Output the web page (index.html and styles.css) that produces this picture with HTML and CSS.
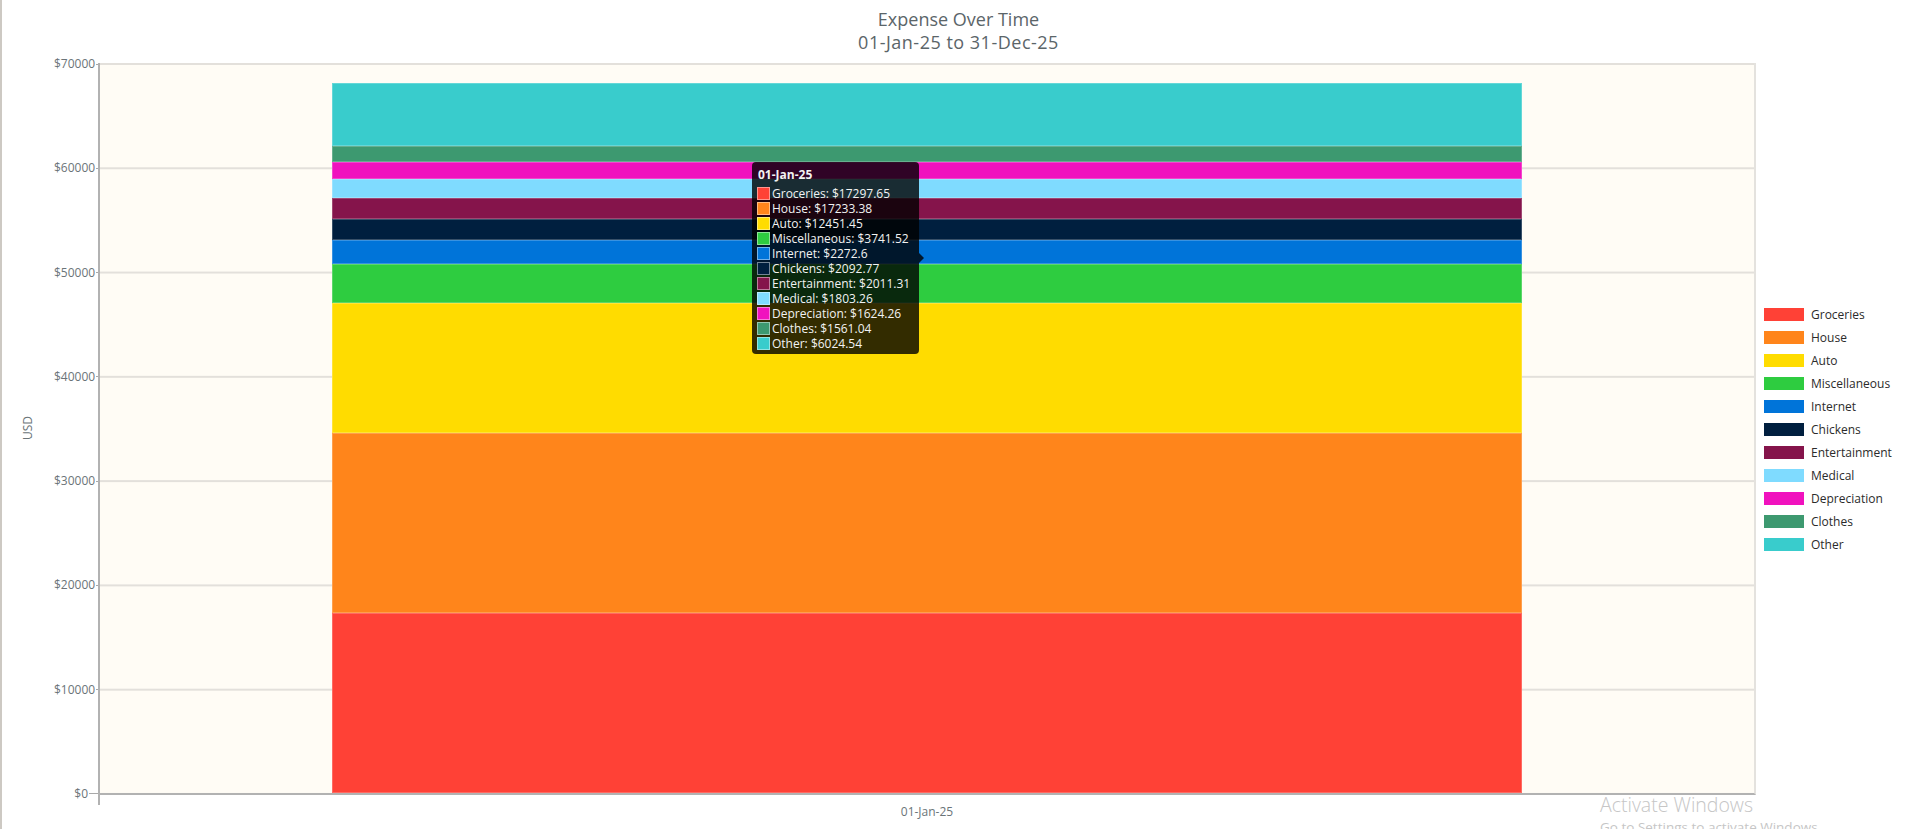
FILE: index.html
```html
<!DOCTYPE html>
<html>
<head>
<meta charset="utf-8">
<title>Expense Over Time</title>
<link rel="stylesheet" href="styles.css">
</head>
<body>
<div class="page">
  <div class="title">
    <div class="t1">Expense Over Time</div>
    <div class="t2">01-Jan-25 to 31-Dec-25</div>
  </div>
  <div class="chart-row">
    <div class="y-title"><span>USD</span></div>
    <div class="y-labels">
      <div class="yl"><span class="yt">$70000</span><i class="tick"></i></div>
      <div class="yl"><span class="yt">$60000</span><i class="tick"></i></div>
      <div class="yl"><span class="yt">$50000</span><i class="tick"></i></div>
      <div class="yl"><span class="yt">$40000</span><i class="tick"></i></div>
      <div class="yl"><span class="yt">$30000</span><i class="tick"></i></div>
      <div class="yl"><span class="yt">$20000</span><i class="tick"></i></div>
      <div class="yl"><span class="yt">$10000</span><i class="tick"></i></div>
      <div class="yl"><span class="yt">$0</span><i class="tick"></i></div>
    </div>
    <div class="plot-col">
      <div class="plot">
        <div class="bar">
          <div class="seg c-groceries" style="height:24.7109%"></div>
          <div class="seg c-house" style="height:24.6191%"></div>
          <div class="seg c-auto" style="height:17.7878%"></div>
          <div class="seg c-misc" style="height:5.3450%"></div>
          <div class="seg c-internet" style="height:3.2466%"></div>
          <div class="seg c-chickens" style="height:2.9897%"></div>
          <div class="seg c-entertainment" style="height:2.8733%"></div>
          <div class="seg c-medical" style="height:2.5761%"></div>
          <div class="seg c-depreciation" style="height:2.3204%"></div>
          <div class="seg c-clothes" style="height:2.2301%"></div>
          <div class="seg c-other" style="height:8.6065%"></div>
        </div>
        <div class="tooltip">
          <div class="tt-title">01-Jan-25</div>
          <div class="tt-row"><i class="tt-sw c-groceries"></i>Groceries: $17297.65</div>
          <div class="tt-row"><i class="tt-sw c-house"></i>House: $17233.38</div>
          <div class="tt-row"><i class="tt-sw c-auto"></i>Auto: $12451.45</div>
          <div class="tt-row"><i class="tt-sw c-misc"></i>Miscellaneous: $3741.52</div>
          <div class="tt-row"><i class="tt-sw c-internet"></i>Internet: $2272.6</div>
          <div class="tt-row"><i class="tt-sw c-chickens"></i>Chickens: $2092.77</div>
          <div class="tt-row"><i class="tt-sw c-entertainment"></i>Entertainment: $2011.31</div>
          <div class="tt-row"><i class="tt-sw c-medical"></i>Medical: $1803.26</div>
          <div class="tt-row"><i class="tt-sw c-depreciation"></i>Depreciation: $1624.26</div>
          <div class="tt-row"><i class="tt-sw c-clothes"></i>Clothes: $1561.04</div>
          <div class="tt-row"><i class="tt-sw c-other"></i>Other: $6024.54</div>
        </div>
      </div>
      <div class="x-label">01-Jan-25</div>
    </div>
    <div class="legend">
      <div class="lg-item"><i class="lg-sw c-groceries"></i>Groceries</div>
      <div class="lg-item"><i class="lg-sw c-house"></i>House</div>
      <div class="lg-item"><i class="lg-sw c-auto"></i>Auto</div>
      <div class="lg-item"><i class="lg-sw c-misc"></i>Miscellaneous</div>
      <div class="lg-item"><i class="lg-sw c-internet"></i>Internet</div>
      <div class="lg-item"><i class="lg-sw c-chickens"></i>Chickens</div>
      <div class="lg-item"><i class="lg-sw c-entertainment"></i>Entertainment</div>
      <div class="lg-item"><i class="lg-sw c-medical"></i>Medical</div>
      <div class="lg-item"><i class="lg-sw c-depreciation"></i>Depreciation</div>
      <div class="lg-item"><i class="lg-sw c-clothes"></i>Clothes</div>
      <div class="lg-item"><i class="lg-sw c-other"></i>Other</div>
    </div>
  </div>
  <div class="watermark">
    <div class="wm-1">Activate Windows</div>
    <div class="wm-2">Go to Settings to activate Windows.</div>
  </div>
</div>
</body>
</html>
```

FILE: styles.css
```css
html, body {
  margin: 0;
  padding: 0;
  background: #ffffff;
}
body {
  width: 1915px;
  height: 829px;
  overflow: hidden;
  font-family: "Open Sans", "Noto Sans", sans-serif;
}
.page {
  position: relative;
  height: 829px;
  border-left: 2px solid #cdc9c3;
  box-sizing: border-box;
}
.title {
  height: 63px;
  box-sizing: border-box;
  padding-top: 8px;
  text-align: center;
  font-size: 18px;
  line-height: 23px;
  color: #5b6569;
}
.t2 {
  letter-spacing: 0.5px;
}
.chart-row {
  display: flex;
  align-items: flex-start;
}
.y-title {
  width: 52px;
  height: 730px;
  display: flex;
  align-items: center;
  justify-content: center;
}
.y-title span {
  transform: rotate(-90deg);
  font-size: 12px;
  color: #6b7478;
  line-height: 14px;
}
.y-labels {
  width: 44px;
  height: 730px;
  display: flex;
  flex-direction: column;
  justify-content: space-between;
  margin-top: 1px;
}
.yl {
  height: 0;
  display: flex;
  align-items: center;
  justify-content: flex-end;
}
.yt {
  font-size: 12px;
  line-height: 16px;
  color: #6b7478;
  margin-right: 1px;
}
.tick {
  display: block;
  width: 9px;
  height: 1px;
  background: #a9a9a9;
}
.plot-col {
  width: 1658px;
  display: flex;
  flex-direction: column;
}
.plot {
  position: relative;
  height: 730px;
  background-color: #fffcf5;
  background-image: linear-gradient(#e3e0db 0, #e3e0db 2px, transparent 2px);
  background-size: 100% 104.2857px;
  border-left: 2px solid #b2b2b2;
  border-right: 2px solid #e4e2de;
  border-bottom: 2px solid #b2b2b2;
  display: flex;
  justify-content: center;
  align-items: flex-end;
}
.plot::after {
  content: "";
  position: absolute;
  left: -2px;
  bottom: -12px;
  width: 2px;
  height: 10px;
  background: #b2b2b2;
}
.bar {
  width: 72%;
  height: 100%;
  display: flex;
  flex-direction: column-reverse;
}
.seg {
  flex: none;
  box-shadow: inset 0 0 0 1px rgba(255, 255, 255, 0.22);
}
.c-groceries { background: #ff4136; }
.c-house { background: #ff851b; }
.c-auto { background: #ffdc00; }
.c-misc { background: #2ecc40; }
.c-internet { background: #0074d9; }
.c-chickens { background: #001f3f; }
.c-entertainment { background: #85144b; }
.c-medical { background: #7fdbff; }
.c-depreciation { background: #f012be; }
.c-clothes { background: #3d9970; }
.c-other { background: #39cccc; }

.tooltip {
  position: absolute;
  left: 652px;
  top: 99px;
  width: 167px;
  height: 192px;
  box-sizing: border-box;
  padding: 4px 6px 3px 5px;
  background: rgba(0, 0, 0, 0.8);
  border-radius: 4px;
  color: #f2f2f2;
  font-size: 12px;
  line-height: 15px;
  white-space: nowrap;
}
.tooltip::after {
  content: "";
  position: absolute;
  right: -5px;
  top: 91px;
  border-top: 5px solid transparent;
  border-bottom: 5px solid transparent;
  border-left: 5px solid rgba(0, 0, 0, 0.8);
}
.tt-title {
  font-weight: bold;
  line-height: 17px;
  margin-bottom: 3px;
  padding-left: 1px;
}
.tt-row {
  display: flex;
  align-items: center;
  height: 15px;
}
.tt-sw {
  display: block;
  width: 11px;
  height: 11px;
  border: 1px solid rgba(255, 255, 255, 0.45);
  margin-right: 2px;
  flex: none;
}
.x-label {
  text-align: center;
  font-size: 12px;
  line-height: 16px;
  color: #6b7478;
  margin-top: 9px;
}
.legend {
  height: 730px;
  display: flex;
  flex-direction: column;
  justify-content: center;
  padding-left: 8px;
  margin-top: 1px;
}
.lg-item {
  display: flex;
  align-items: center;
  height: 23px;
  font-size: 12px;
  color: #2b2b2b;
}
.lg-sw {
  display: block;
  width: 40px;
  height: 13px;
  margin-right: 7px;
  flex: none;
}
.watermark {
  position: absolute;
  left: 1598px;
  top: 792px;
  color: #c6c6c6;
  white-space: nowrap;
}
.wm-1 {
  font-size: 19.5px;
  line-height: 26px;
  font-weight: 300;
}
.wm-2 {
  font-size: 13.5px;
  line-height: 18px;
}
```
